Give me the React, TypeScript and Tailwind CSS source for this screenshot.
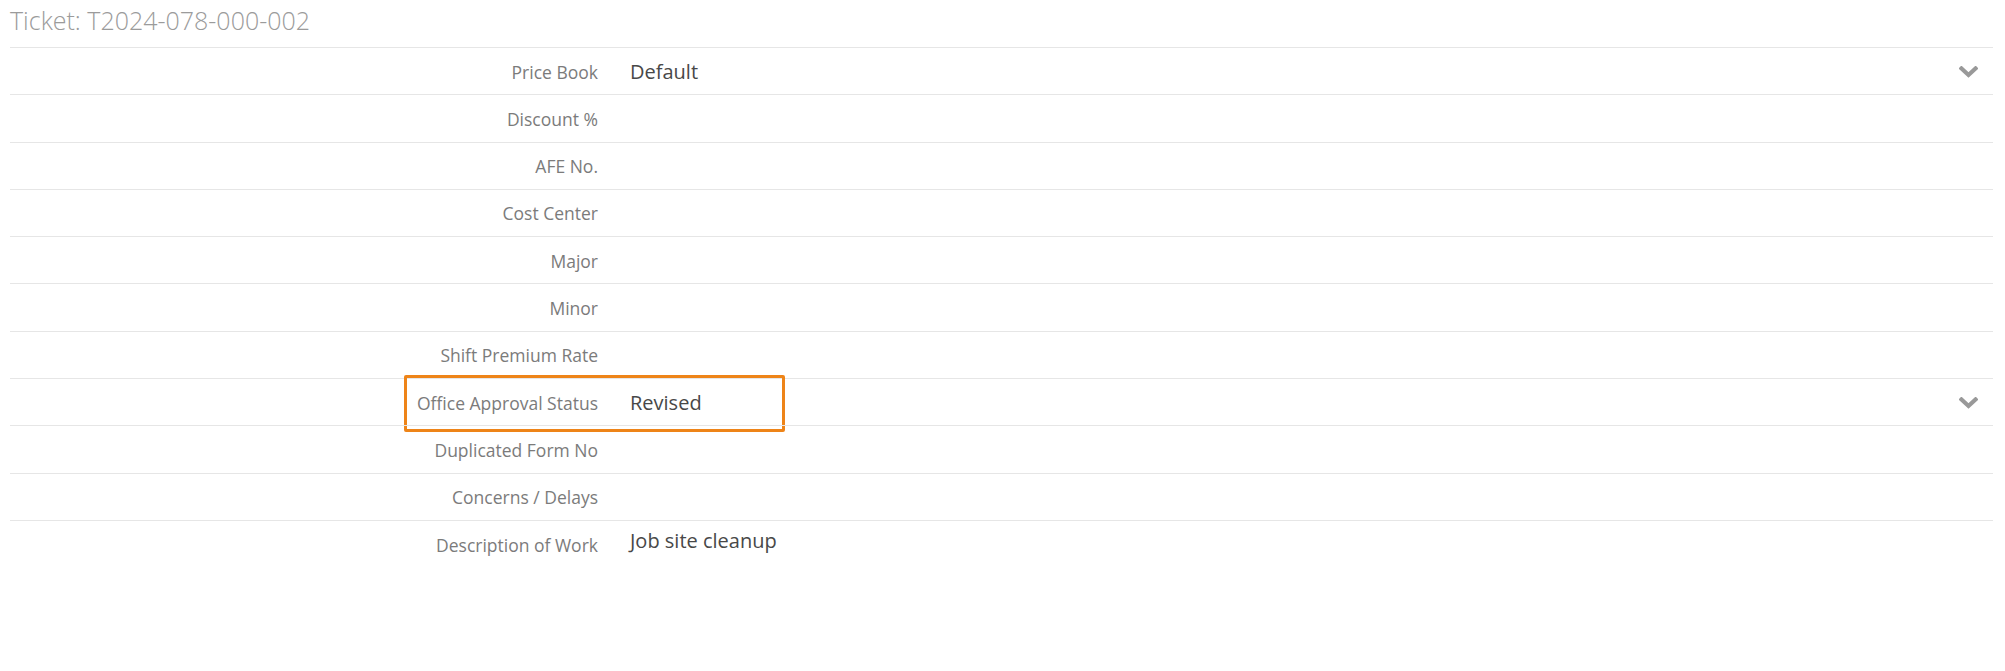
const rows: { label: string; value?: string; select?: boolean; multiline?: boolean; highlight?: boolean }[] = [
    {label: "Price Book", value: "Default", select: true},
    {label: "Discount %"},
    {label: "AFE No."},
    {label: "Cost Center"},
    {label: "Major"},
    {label: "Minor"},
    {label: "Shift Premium Rate"},
    {label: "Office Approval Status", value: "Revised", select: true, highlight: true},
    {label: "Duplicated Form No"},
    {label: "Concerns / Delays"},
    {label: "Description of Work", value: "Job site cleanup", multiline: true},
];

const Chevron = () => (
    <svg width="19" height="12" viewBox="0 0 19 12" fill="none">
        <polyline points="2.5,2.5 9.5,9 16.5,2.5" stroke="#999999" strokeWidth="4.2" strokeLinecap="square"/>
    </svg>
);

const App = () => {
    return (
        <div className="w-full h-[671px] bg-white font-['Open_Sans',sans-serif] overflow-hidden">
            <div className="ml-[10px] mr-[12px]">
                <div className="h-[47px] pt-[4px] text-[25px] font-light leading-[32px] text-[#9b9b9b]">
                    Ticket: T2024-078-000-002
                </div>
                {rows.map((row) => (
                    <div
                        key={row.label}
                        className={
                            "relative flex h-[47.3px] border-t border-[#e6e6e6] " +
                            (row.multiline ? "items-start" : "items-center")
                        }
                    >
                        <div
                            className={
                                "w-[588px] shrink-0 text-right text-[17.5px] text-[#7b7b7b] " +
                                (row.multiline ? "pt-[11px]" : "pt-[1px]")
                            }
                        >
                            {row.label}
                        </div>
                        <div
                            className={
                                "ml-[32px] flex-1 text-[20px] text-[#484848] " +
                                (row.multiline ? "pt-[5px]" : "pt-[2px]")
                            }
                        >
                            {row.value}
                        </div>
                        {row.select && (
                            <div className="pr-[15px] pt-[2px] flex items-center">
                                <Chevron/>
                            </div>
                        )}
                        {row.highlight && (
                            <div
                                className="absolute left-[394px] -top-[4px] w-[381px] h-[57px] border-[3px] border-[#ee8418] rounded-[2px] pointer-events-none"
                            />
                        )}
                    </div>
                ))}
            </div>
        </div>
    );
};

export default App;
